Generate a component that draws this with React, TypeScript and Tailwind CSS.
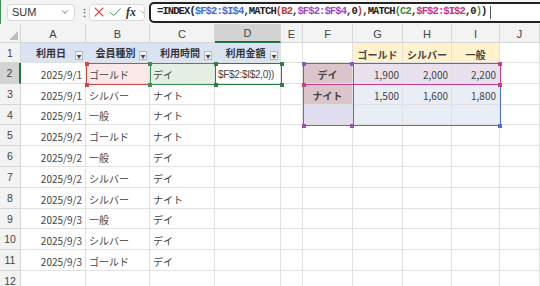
import { ChevronDown, X, Check } from 'lucide-react';

type Cell = { text?: string; cls?: string };

const jp = '[font-family:"Noto_Sans_CJK_JP","Noto_Sans",sans-serif]';

const letters = ['A', 'B', 'C', 'D', 'E', 'F', 'G', 'H', 'I', 'J'];

const data: [string, string, string][] = [
  ['2025/9/1', 'ゴールド', 'デイ'],
  ['2025/9/1', 'シルバー', 'ナイト'],
  ['2025/9/1', '一般', 'ナイト'],
  ['2025/9/2', 'ゴールド', 'ナイト'],
  ['2025/9/2', '一般', 'デイ'],
  ['2025/9/2', 'シルバー', 'デイ'],
  ['2025/9/2', 'シルバー', 'ナイト'],
  ['2025/9/3', '一般', 'デイ'],
  ['2025/9/3', 'シルバー', 'デイ'],
  ['2025/9/3', 'ゴールド', 'デイ'],
];

// price table F2:I4
const table: Cell[][] = [
  [
    { text: 'デイ', cls: 'bg-[#dcc4cb] justify-center font-bold text-[#333]' },
    { text: '1,900', cls: 'bg-[#e9e1ee] justify-end' },
    { text: '2,000', cls: 'bg-[#e9e1ee] justify-end' },
    { text: '2,200', cls: 'bg-[#e9e1ee] justify-end' },
  ],
  [
    { text: 'ナイト', cls: 'bg-[#dcc4cb] justify-center font-bold text-[#333]' },
    { text: '1,500', cls: 'bg-[#e9edf6] justify-end' },
    { text: '1,600', cls: 'bg-[#e9edf6] justify-end' },
    { text: '1,800', cls: 'bg-[#e9edf6] justify-end' },
  ],
  [
    { cls: 'bg-[#e0def0]' },
    { cls: 'bg-[#e9edf6]' },
    { cls: 'bg-[#e9edf6]' },
    { cls: 'bg-[#e9edf6]' },
  ],
];

function GridCell({ text, cls }: Cell) {
  return (
    <div
      className={`flex items-center px-[3px] pt-[3px] border-r border-b border-[#e1e1e1] whitespace-nowrap overflow-visible text-[10px] text-[#444] ${cls ?? ''}`}
    >
      {text}
    </div>
  );
}

function FilterCell({ text }: { text: string }) {
  return (
    <div className="relative flex items-center justify-center pr-[4px] border-r border-b border-[#e1e1e1] bg-[#dae3f3] text-[10px] font-bold text-[#333]">
      <span>{text}</span>
      <span className="absolute right-[2px] bottom-[2px] w-[8px] h-[9px] bg-[#f4f4f4] border border-[#b8b8b8] flex items-center justify-center text-[5px] leading-none text-[#444]">
        ▼
      </span>
    </div>
  );
}

function RowHead({ n, active }: { n: number; active?: boolean }) {
  return (
    <div
      className={`flex items-center justify-center pt-[2px] border-b border-[#d6d6d6] text-[10.5px] text-[#444] [font-family:"Liberation_Sans",sans-serif] ${
        active ? 'bg-[#d3d3d3] border-r-2 border-r-[#217346]' : 'bg-[#f3f3f3] border-r border-r-[#d6d6d6]'
      }`}
    >
      {n}
    </div>
  );
}

function Handle({ pos, bg }: { pos: string; bg: string }) {
  return <span className={`absolute w-[4px] h-[4px] pointer-events-none ${pos} ${bg}`} />;
}

export default function App() {
  return (
    <div className={`w-[540px] h-[286px] overflow-hidden bg-white flex flex-col ${jp}`}>
      {/* formula bar */}
      <div className="h-[24px] shrink-0 bg-[#f3f3f3] flex items-center gap-[4px] pl-[6px] border-l border-l-[#3f8f5a]">
        <div className="w-[68px] h-[17px] bg-white rounded-[4px] border border-[#dadada] flex items-center justify-between px-[4px] text-[11px] text-[#333] [font-family:'Liberation_Sans',sans-serif]">
          <span>SUM</span>
          <ChevronDown className="w-[10px] h-[10px] text-[#555]" strokeWidth={2} />
        </div>
        <span className="text-[#777] text-[11px] font-bold w-[6px] text-center leading-none">⋮</span>
        <div className="w-[56px] h-[17px] bg-white rounded-[4px] border border-[#dadada] flex items-center gap-[1px] pl-[1px] overflow-hidden">
          <X className="w-[16px] h-[16px] shrink-0 text-[#e04848]" strokeWidth={1.6} />
          <Check className="w-[15px] h-[15px] shrink-0 text-[#3e9a4f]" strokeWidth={1.6} />
          <span className="ml-[2px] text-[12px] italic font-bold text-[#333] [font-family:'Liberation_Serif',serif] leading-none">fx</span>
          <ChevronDown className="ml-[2px] w-[8px] h-[8px] shrink-0 text-[#888]" strokeWidth={2} />
        </div>
        <div className="flex-1 h-[21px] -mr-[10px] bg-white rounded-[5px] border-2 border-[#222] flex items-center pl-[6px] text-[10.5px] font-bold tracking-[-0.9px] text-[#222] whitespace-nowrap [font-family:'Liberation_Mono',monospace]">
          <span>=INDEX(</span>
          <span className="text-[#3b6fd6]">$F$2:$I$4</span>
          <span>,MATCH</span>
          <span className="text-[#c44040]">(B2</span>
          <span>,</span>
          <span className="text-[#9b48c8]">$F$2:$F$4</span>
          <span>,0</span>
          <span className="text-[#c44040]">)</span>
          <span>,MATCH</span>
          <span className="text-[#3d8c4c]">(C2</span>
          <span>,</span>
          <span className="text-[#c8308a]">$F$2:$I$2</span>
          <span>,0</span>
          <span className="text-[#3d8c4c]">)</span>
          <span>)</span>
          <span className="ml-[3px] w-px h-[13px] bg-[#555]" />
        </div>
      </div>

      {/* sheet */}
      <div className="relative flex-1">
        <div className="grid grid-cols-[21px_65px_64px_65px_66px_22px_50px_50px_49px_48px_40px] grid-rows-[19px_20px_repeat(11,20.8px)]">
          {/* column headers */}
          <div className="relative bg-[#f3f3f3] border-r border-b border-[#d6d6d6]">
            <span className="absolute right-[2px] bottom-[2px] w-0 h-0 border-l-[9px] border-l-transparent border-b-[9px] border-b-[#bdbdbd]" />
          </div>
          {letters.map((l) => (
            <div
              key={l}
              className={`flex items-center justify-center pt-[2px] text-[11px] text-[#444] [font-family:"Liberation_Sans",sans-serif] border-r border-[#d6d6d6] ${
                l === 'D' ? 'bg-[#d3d3d3] border-b-2 border-b-[#217346]' : 'bg-[#f3f3f3] border-b border-b-[#d6d6d6]'
              }`}
            >
              {l}
            </div>
          ))}

          {/* row 1 */}
          <RowHead n={1} />
          <FilterCell text="利用日" />
          <FilterCell text="会員種別" />
          <FilterCell text="利用時間" />
          <FilterCell text="利用金額" />
          <GridCell />
          <GridCell />
          <GridCell text="ゴールド" cls="bg-[#fff2cc] justify-center font-bold text-[#333]" />
          <GridCell text="シルバー" cls="bg-[#fff2cc] justify-center font-bold text-[#333]" />
          <GridCell text="一般" cls="bg-[#fff2cc] justify-center font-bold text-[#333]" />
          <GridCell />

          {/* rows 2-11 */}
          {data.map(([date, type, time], i) => (
            <div key={i} className="contents">
              <RowHead n={i + 2} active={i === 0} />
              <GridCell text={date} cls="justify-end" />
              <GridCell text={type} cls={i === 0 ? 'bg-[#fbe8e8]' : ''} />
              <GridCell text={time} cls={i === 0 ? 'bg-[#e4efe4]' : ''} />
              <GridCell
                text={i === 0 ? '$F$2:$I$2,0))' : undefined}
                cls="text-[10.5px] text-[#333] [font-family:'Liberation_Sans',sans-serif] tracking-[-0.3px]"
              />
              <GridCell />
              {i < 3 ? (
                table[i].map((c, j) => <GridCell key={j} text={c.text} cls={c.cls} />)
              ) : (
                <>
                  <GridCell />
                  <GridCell />
                  <GridCell />
                  <GridCell />
                </>
              )}
              <GridCell />
            </div>
          ))}

          {/* row 12 */}
          <RowHead n={12} />
          {letters.map((l) => (
            <GridCell key={l} />
          ))}
        </div>

        {/* reference range outlines */}
        <div className="absolute pointer-events-none left-[303px] top-[38.5px] w-[198px] h-[63.5px] border-[1.5px] border-[#4f74d0]" />
        <div className="absolute pointer-events-none left-[303px] top-[38.5px] w-[51px] h-[63.5px] border-[1.5px] border-[#9b4fc0]" />
        <div className="absolute pointer-events-none left-[303px] top-[38.5px] w-[198px] h-[22px] border-[1.5px] border-[#c83c8c]" />
        <div className="absolute pointer-events-none left-[85.5px] top-[38.5px] w-[65px] h-[22px] border-[1.5px] border-[#cc4a4a]" />
        <div className="absolute pointer-events-none left-[150px] top-[38.5px] w-[65.5px] h-[22px] border-[1.5px] border-[#3f8f5a]" />
        <div className="absolute pointer-events-none left-[215px] top-[38.5px] w-[67px] h-[22px] border-[1.5px] border-[#2f7d4a]" />

        <Handle pos="left-[302px] top-[37.5px]" bg="bg-[#9b4fc0]" />
        <Handle pos="left-[350px] top-[37.5px]" bg="bg-[#9b4fc0]" />
        <Handle pos="left-[302px] top-[58.5px]" bg="bg-[#c83c8c]" />
        <Handle pos="left-[498px] top-[37.5px]" bg="bg-[#c83c8c]" />
        <Handle pos="left-[498px] top-[58.5px]" bg="bg-[#c83c8c]" />
        <Handle pos="left-[302px] top-[99.5px]" bg="bg-[#9b4fc0]" />
        <Handle pos="left-[350px] top-[99.5px]" bg="bg-[#9b4fc0]" />
        <Handle pos="left-[498px] top-[99.5px]" bg="bg-[#4f74d0]" />
        <Handle pos="left-[84.5px] top-[37.5px]" bg="bg-[#cc4a4a]" />
        <Handle pos="left-[84.5px] top-[58.5px]" bg="bg-[#cc4a4a]" />
        <Handle pos="left-[148px] top-[37.5px]" bg="bg-[#3f8f5a]" />
        <Handle pos="left-[148px] top-[58.5px]" bg="bg-[#3f8f5a]" />
        <Handle pos="left-[213.5px] top-[37.5px]" bg="bg-[#2f7d4a]" />
        <Handle pos="left-[213.5px] top-[58.5px]" bg="bg-[#2f7d4a]" />
        <Handle pos="left-[279.5px] top-[58.5px]" bg="bg-[#2f7d4a]" />
        <Handle pos="left-[279.5px] top-[37.5px]" bg="bg-[#2f7d4a]" />
      </div>
    </div>
  );
}
